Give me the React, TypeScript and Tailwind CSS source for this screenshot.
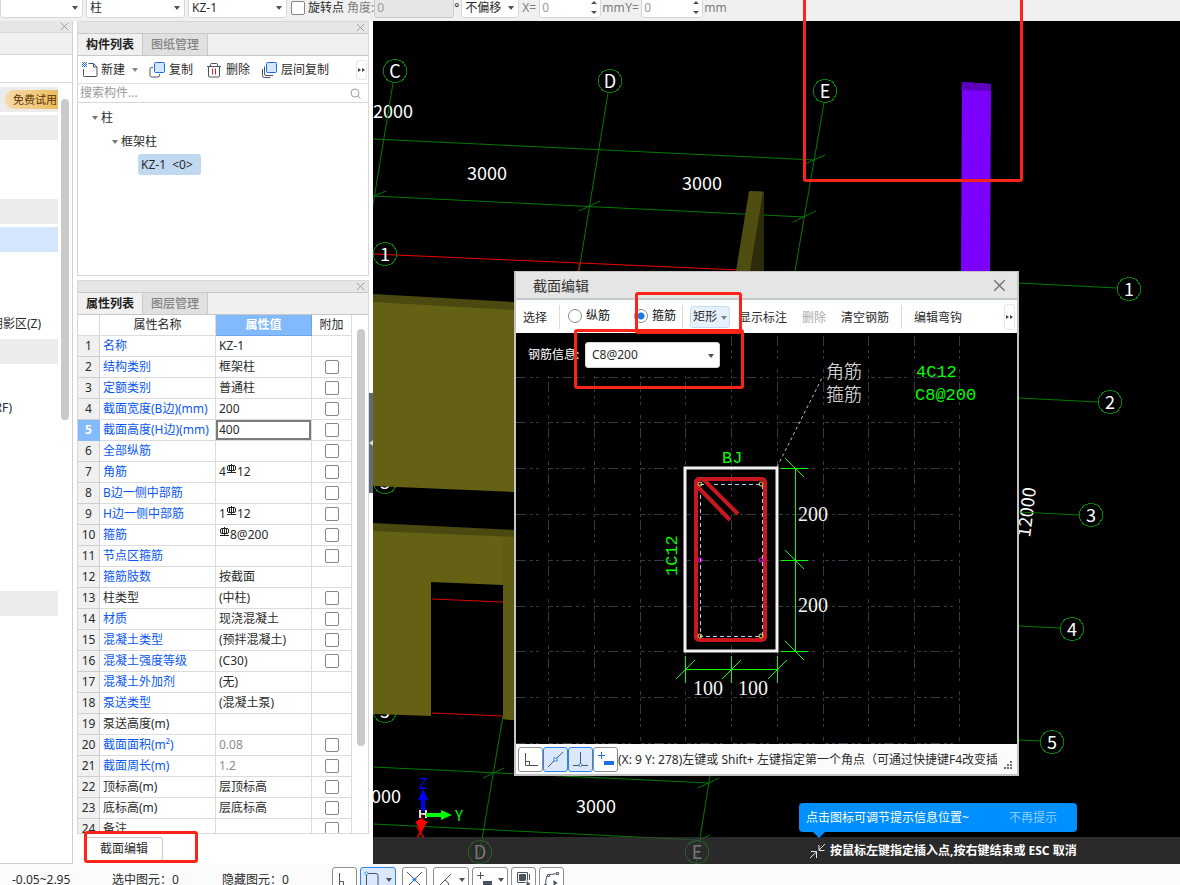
import type { ReactNode } from 'react';

const FONT = "font-['Noto_Sans','Noto_Sans_CJK_SC',sans-serif]";
const CAD_FONT = "font-['Noto_Sans_CJK_SC',sans-serif]";

interface PropertyRow {
  name: string;
  value: string;
  /** Shows a tick box in the 附加 column. */
  extra: boolean;
  /** Private attributes are drawn in black, public ones in blue. */
  own?: boolean;
  readOnly?: boolean;
  rebar?: [string, string];
}

const PROPERTIES: PropertyRow[] = [
  { name: '名称', value: 'KZ-1', extra: false },
  { name: '结构类别', value: '框架柱', extra: true },
  { name: '定额类别', value: '普通柱', extra: true },
  { name: '截面宽度(B边)(mm)', value: '200', extra: true },
  { name: '截面高度(H边)(mm)', value: '400', extra: true },
  { name: '全部纵筋', value: '', extra: true },
  { name: '角筋', value: '', rebar: ['4', '12'], extra: true },
  { name: 'B边一侧中部筋', value: '', extra: true },
  { name: 'H边一侧中部筋', value: '', rebar: ['1', '12'], extra: true },
  { name: '箍筋', value: '', rebar: ['', '8@200'], extra: true },
  { name: '节点区箍筋', value: '', extra: true },
  { name: '箍筋肢数', value: '按截面', extra: false },
  { name: '柱类型', value: '(中柱)', extra: true, own: true },
  { name: '材质', value: '现浇混凝土', extra: true },
  { name: '混凝土类型', value: '(预拌混凝土)', extra: true },
  { name: '混凝土强度等级', value: '(C30)', extra: true },
  { name: '混凝土外加剂', value: '(无)', extra: false },
  { name: '泵送类型', value: '(混凝土泵)', extra: false },
  { name: '泵送高度(m)', value: '', extra: false, own: true },
  { name: '截面面积(m²)', value: '0.08', extra: true, readOnly: true },
  { name: '截面周长(m)', value: '1.2', extra: true, readOnly: true },
  { name: '顶标高(m)', value: '层顶标高', extra: true, own: true },
  { name: '底标高(m)', value: '层底标高', extra: true, own: true },
  { name: '备注', value: '', extra: true, own: true },
];

const SELECTED_ROW = 4;

function Caret({ className = '' }: { className?: string }) {
  return (
    <svg width="6" height="4" viewBox="0 0 6 4" className={className} aria-hidden="true">
      <path d="M0 0h6L3 4z" fill="currentColor" />
    </svg>
  );
}

function CloseIcon({ size }: { size: number }) {
  return (
    <svg width={size} height={size} viewBox="0 0 10 10" aria-hidden="true">
      <path d="M1 1l8 8M9 1l-8 8" stroke="currentColor" fill="none" />
    </svg>
  );
}

function CheckBox({ label }: { label: string }) {
  return (
    <input
      type="checkbox"
      aria-label={label}
      className="block size-[14px] shrink-0 appearance-none rounded-[2px] border border-[#868686] bg-white checked:bg-[#2f86ea]"
    />
  );
}

/* ---------- top option bar ---------- */

function BarSelect({ label, value, className }: { label: string; value: string; className: string }) {
  return (
    <div className={`relative shrink-0 ${className}`}>
      <select
        aria-label={label}
        defaultValue={value}
        className="block h-[21px] w-full appearance-none rounded-[3px] border border-[#d4d7dc] bg-white pl-[3px] text-[12px] leading-[19px]"
      >
        <option>{value}</option>
      </select>
      <Caret className="absolute top-[9px] right-[5px] text-[#4a5260]" />
    </div>
  );
}

function BarSpinner({ label }: { label: string }) {
  return (
    <div className="relative w-[62px] shrink-0">
      <input
        aria-label={label}
        defaultValue="0"
        className="block h-[21px] w-full rounded-[3px] border border-[#d4d7dc] bg-white pl-[2px] text-[#9a9a9a]"
      />
      <svg width="6" height="14" viewBox="0 0 6 14" className="absolute top-[3px] right-1 text-[#4a5260]">
        <path d="M0 4h6L3 1zM0 11h6L3 14z" fill="currentColor" />
      </svg>
    </div>
  );
}

function OptionBar() {
  return (
    <header className="flex h-[21px] shrink-0 items-center overflow-hidden bg-[#f0f0f0] pb-[6px] text-[12px] leading-[14px] whitespace-nowrap">
      <BarSelect label="楼层" value="" className="w-[83px]" />
      <BarSelect label="构件类型" value="柱" className="ml-[3px] w-[99px]" />
      <BarSelect label="构件" value="KZ-1" className="ml-[3px] w-[99px]" />
      <label className="ml-1 flex items-center gap-[3px]">
        <CheckBox label="旋转点" />
        旋转点
      </label>
      <label className="ml-[3px] flex items-center text-[#7d7d7d]">
        角度:
        <input
          defaultValue="0"
          className="h-[21px] w-[80px] rounded-[3px] border border-[#c9cdd3] bg-[#e6e6e6] pl-[2px] text-[#9a9a9a]"
        />
      </label>
      <span className="w-[7px]">°</span>
      <BarSelect label="偏移方式" value="不偏移" className="w-[58px]" />
      <span className="ml-[3px] w-[17px] text-[#7d7d7d]">X=</span>
      <BarSpinner label="X" />
      <span className="ml-[1px] w-[23px] text-[#7d7d7d]">mm</span>
      <span className="w-[16px] text-[#7d7d7d]">Y=</span>
      <BarSpinner label="Y" />
      <span className="ml-[1px] text-[#7d7d7d]">mm</span>
    </header>
  );
}

/* ---------- far left navigation, cut off by the window edge ---------- */

const NAV_ROWS: Record<number, string> = {
  1: 'bg-[#ececec]',
  4: 'bg-[#ececec]',
  5: 'bg-[#d3e6fc]',
  9: 'bg-[#ececec]',
  18: 'bg-[#ececec]',
};

function NavColumn() {
  return (
    <aside className="flex w-[73px] shrink-0 flex-col border-r border-b border-[#d0d0d0] bg-white">
      <div className="flex h-3 shrink-0 items-center justify-end border-b border-[#d8d8d8] bg-[#e6e6e6] pr-[3px] text-[#999]">
        <button type="button" aria-label="关闭导航">
          <CloseIcon size={9} />
        </button>
      </div>
      <div className="h-[22px] shrink-0 border-b border-[#d8d8d8] bg-[#f0f0f0]" />
      <div className="h-[28px] shrink-0 border-b border-[#d8d8d8]" />
      <div className="flex min-h-0 flex-1 overflow-hidden pt-[4px]">
        <ul className="flex w-[58px] flex-col gap-[3px]">
          <li className="flex h-[25px] items-center justify-end bg-[#ececec]">
            <button
              type="button"
              className="h-[19px] w-[53px] rounded-l-full bg-linear-to-r from-[#f6daa9] to-[#ecbd5c] pl-[7px] text-[11px] leading-[19px] whitespace-nowrap text-[#5c3206]"
            >
              免费试用
            </button>
          </li>
          {Array.from({ length: 18 }, (_, i) => i + 1).map((n) => (
            <li key={n} className={`flex h-[25px] shrink-0 items-center overflow-hidden text-[12px] ${NAV_ROWS[n] ?? ''}`}>
              {n === 8 && <span className="flex w-[41px] justify-end overflow-hidden whitespace-nowrap">阴影区(Z)</span>}
              {n === 11 && <span className="flex w-[12px] justify-end overflow-hidden whitespace-nowrap">(RF)</span>}
            </li>
          ))}
        </ul>
        <div className="mt-3 ml-[3px] h-[321px] w-2 rounded-full bg-[#c9c9c9]" />
      </div>
    </aside>
  );
}

/* ---------- dock panels ---------- */

function PanelHead({ tabs }: { tabs: [string, string] }) {
  return (
    <>
      <div className="flex h-[11px] shrink-0 items-center justify-end bg-[#e6e6e6] pr-[3px] text-[#999]">
        <button type="button" aria-label={`关闭${tabs[0]}`}>
          <CloseIcon size={9} />
        </button>
      </div>
      <div role="tablist" className="flex h-[23px] shrink-0 border-y border-[#c6c8cc] bg-[#f0f0f0] text-[12px] leading-[21px]">
        <button type="button" role="tab" aria-selected="true" className="w-[65px] border-r border-[#c6c8cc] font-bold text-[#222]">
          {tabs[0]}
        </button>
        <button type="button" role="tab" aria-selected="false" className="w-[65px] border-r border-[#c6c8cc] bg-[#e0e0e0] font-medium text-[#858585]">
          {tabs[1]}
        </button>
      </div>
    </>
  );
}

function CopyIcon({ layered = false }: { layered?: boolean }) {
  return (
    <svg width="16" height="16" viewBox="0 0 16 16" fill="none" aria-hidden="true">
      {layered ? (
        <path d="M3.500 4.500v7.500q0 1.500 1.500 1.500h7M1.500 7v6.500q0 2 2 2h6" stroke="#4a5260" />
      ) : (
        <path d="M4 5.500H2.500q-1.500 0-1.500 1.500v6.500q0 1.500 1.500 1.500h6.500q1.500 0 1.500-1.500v-1.500" stroke="#4a5260" />
      )}
      <rect x="5.500" y="0.500" width="10" height="10" rx="1" fill="#d6e7fd" stroke="#1a6fe0" />
    </svg>
  );
}

function NewIcon() {
  return (
    <svg width="16" height="16" viewBox="0 0 16 16" fill="none" aria-hidden="true">
      <path d="M6.500 1.500h5l3.500 3.500v8.500q0 1-1 1H2.500q-1 0-1-1V7M11.500 1.500V5H15" stroke="#4a5260" />
      <path d="M0 0h1v1H0zM2 0h1v1H2zM4 0h1v1H4zM1 1h1v1H1zM3 1h1v1H3zM0 2h1v1H0zM2 2h1v1H2zM4 2h1v1H4zM1 3h1v1H1zM3 3h1v1H3zM0 4h1v1H0zM2 4h1v1H2zM4 4h1v1H4z" fill="#1a6fe0" />
    </svg>
  );
}

function TrashIcon() {
  return (
    <svg width="14" height="16" viewBox="0 0 14 16" fill="none" aria-hidden="true">
      <path d="M0 4.500h14M3.500 4V2.500q0-1 1-1h5q1 0 1 1V4M1.500 5v9q0 1 1 1h9q1 0 1-1V5" stroke="#4a5260" />
      <path d="M5.500 6.500v6M8.500 6.500v6" stroke="#e02020" />
    </svg>
  );
}

function OverflowButton({ className }: { className: string }) {
  return (
    <button type="button" aria-label="更多" className={`flex shrink-0 items-center justify-center rounded-[3px] border border-[#e6e6e6] text-[#3f4652] ${className}`}>
      <svg width="7" height="4" viewBox="0 0 7 4" aria-hidden="true">
        <path d="M0 0l3 2-3 2zM4 0l3 2-3 2z" fill="currentColor" />
      </svg>
    </button>
  );
}

function ComponentPanel() {
  return (
    <section className="flex h-[255px] shrink-0 flex-col border border-[#d8d8d8] bg-white">
      <PanelHead tabs={['构件列表', '图纸管理']} />
      <div className="flex h-[28px] shrink-0 items-center border-b border-[#e0e0e0] pt-[1px] pl-1 text-[12px] whitespace-nowrap">
        <button type="button" className="flex items-center gap-[3px]">
          <NewIcon />
          新建
          <Caret className="ml-1 text-[#888]" />
        </button>
        <button type="button" className="ml-[11px] flex items-center gap-1">
          <CopyIcon />
          复制
        </button>
        <button type="button" className="ml-[14px] flex items-center gap-[5px]">
          <TrashIcon />
          删除
        </button>
        <button type="button" className="ml-[11px] flex items-center gap-1">
          <CopyIcon layered />
          层间复制
        </button>
        <OverflowButton className="mr-[1px] ml-auto h-5 w-[11px]" />
      </div>
      <div className="flex h-[19px] shrink-0 items-center border-b border-[#d8d8d8] pr-[7px] pl-[2px]">
        <input
          aria-label="搜索构件"
          placeholder="搜索构件..."
          className="h-[18px] min-w-0 flex-1 text-[12px] outline-none placeholder:text-[#9a9a9a]"
        />
        <svg width="11" height="11" viewBox="0 0 11 11" fill="none" stroke="#a0a0a0" aria-hidden="true">
          <circle cx="5" cy="5" r="4" />
          <path d="M8 8l2.500 2.500" />
        </svg>
      </div>
      <ul className="pt-[3px] text-[12px] leading-6">
        <li className="flex h-6 items-center gap-[3px] pl-[14px]">
          <Caret className="text-[#777]" />柱
        </li>
        <li className="flex h-6 items-center gap-[3px] pl-[34px]">
          <Caret className="text-[#777]" />
          框架柱
        </li>
        <li className="h-6 pl-[60px]">
          <span className="block h-[21px] w-[63px] rounded-[3px] bg-[#c0d8f0] pl-[3px] leading-[21px] whitespace-pre">{'KZ-1  <0>'}</span>
        </li>
      </ul>
    </section>
  );
}

/** Grade mark for HRB400 bars: a circle with a cross bar and two strokes. */
function RebarMark() {
  return (
    <svg width="11" height="11" viewBox="0 0 11 11" fill="none" stroke="#222" className="inline-block align-[1px]" role="img" aria-label="C">
      <path d="M3 1.500h5q1.500 0 1.500 1.500v2q0 1.500-1.500 1.500h-5q-1.500 0-1.500-1.500v-2q0-1.500 1.500-1.500M5.500 0v9M3.500 1.500v5M7.500 1.500v5M1 8.500h9" />
    </svg>
  );
}

function PropertyPanel() {
  return (
    <section className="flex min-h-0 flex-1 flex-col border border-[#d8d8d8] bg-white">
      <PanelHead tabs={['属性列表', '图层管理']} />
      <div className="flex min-h-0 flex-1 overflow-hidden">
        <div className="min-w-0 flex-1">
          <table className="w-full table-fixed border-separate border-spacing-0 text-[12px] leading-5">
            <colgroup>
              <col className="w-[22px]" />
              <col className="w-[116px]" />
              <col className="w-[96px]" />
              <col />
            </colgroup>
            <thead>
              <tr className="h-[21px] text-center">
                <th aria-label="序号" className="border-r border-b border-[#dcdcdc] p-0" />
                <th className="border-r border-b border-[#dcdcdc] p-0 font-normal">属性名称</th>
                <th className="border-r border-b border-[#6aa7ee] bg-[#82bafb] p-0 font-bold text-white">属性值</th>
                <th className="border-r border-b border-[#dcdcdc] p-0 font-normal">附加</th>
              </tr>
            </thead>
            <tbody>
              {PROPERTIES.map((row, i) => (
                <tr key={row.name} className="h-[21px]">
                  <th
                    scope="row"
                    className={`border-r border-b p-0 text-center ${
                      i === SELECTED_ROW ? 'border-[#82bafb] bg-[#82bafb] font-bold text-white' : 'border-[#cfcfcf] bg-[#f0f0f0] font-normal'
                    }`}
                  >
                    {i + 1}
                  </th>
                  <td className={`overflow-hidden border-r border-b border-[#dcdcdc] p-0 pl-[3px] whitespace-nowrap ${row.own ? '' : 'text-[#0a57f5]'}`}>
                    {row.name}
                  </td>
                  <td className={`border-r border-b border-[#dcdcdc] p-0 whitespace-nowrap ${row.readOnly ? 'text-[#8c8c8c]' : ''}`}>
                    {i === SELECTED_ROW ? (
                      <input
                        aria-label={row.name}
                        defaultValue={row.value}
                        className="block h-5 w-full border-2 border-[#7b7b7b] pl-[1px] outline-none"
                      />
                    ) : (
                      <span className="block h-5 pl-[3px]">
                        {row.rebar ? (
                          <>
                            {row.rebar[0]}
                            <RebarMark />
                            {row.rebar[1]}
                          </>
                        ) : (
                          row.value
                        )}
                      </span>
                    )}
                  </td>
                  <td className="border-r border-b border-[#dcdcdc] p-0">
                    {row.extra && i > 0 && (
                      <div className="flex justify-center">
                        <CheckBox label={`${row.name} 附加`} />
                      </div>
                    )}
                  </td>
                </tr>
              ))}
            </tbody>
          </table>
        </div>
        <div className="w-4 shrink-0 pt-[14px] pl-[5px]">
          <div className="h-[417px] w-2 rounded-full bg-[#c9c9c9]" />
        </div>
      </div>
    </section>
  );
}

/* ---------- 3D model view ---------- */

function Bubble({ x, y, label, dim = false }: { x: number; y: number; label: string; dim?: boolean }) {
  const points = Array.from({ length: 10 }, (_, i) => {
    const a = (i * Math.PI) / 5 - Math.PI / 2;
    return `${(x + 12 * Math.cos(a)).toFixed(1)},${(y + 12 * Math.sin(a)).toFixed(1)}`;
  }).join(' ');
  return (
    <g>
      <polygon points={points} fill="none" stroke={dim ? '#00a000' : '#008400'} shapeRendering="crispEdges" />
      <text x={x} y={y + 7} textAnchor="middle" fill="#fff" fontSize="18">
        {label}
      </text>
    </g>
  );
}

function ModelScene() {
  return (
    <svg className={`absolute inset-0 size-full ${CAD_FONT}`} fontSize="18" aria-label="三维模型">
      <g transform="translate(-373 -21)">
        <Bubble x={385} y={482} label="3" />
        <Bubble x={385} y={711} label="5" />

        <g fill="#fff" textAnchor="middle">
          <text x="393" y="118">2000</text>
          <text x="487" y="180">3000</text>
          <text x="702" y="190">3000</text>
          <text x="596" y="813">3000</text>
          <text x="381" y="803">3000</text>
          <text transform="translate(1033 513) rotate(-83)">12000</text>
        </g>

        {/* axis grid */}
        <g stroke="#007a00" fill="none">
          <path d="M393 83L373 205M608 93L579 271M824 103L795 271" />
          <path d="M373 139L815 160M373 196L804 217" />
          <path d="M374 196l12-5M579 211l21-10M805 164l20-9M793 222l23-11" />
          <path d="M1019 283l98 5M1019 398l79 4M1019 512l60 3M1019 626l41 2M1019 740l21 1" />
          <path d="M373 767L709 783M373 824L698 840" />
          <path d="M483 778l21-10M698 788l21-10M690 844l20-9" />
          <path d="M503 716L478 863M710 776L696 863" />
        </g>
        <path d="M373 254L740 270M580 263l-2 8" stroke="#f00000" fill="none" />

        {/* walls */}
        <path d="M373 294L514 302V312L373 304z" fill="#4b4910" />
        <path d="M373 302L514 310V492L373 486z" fill="#646114" />
        <path d="M373 523L514 530V539L373 533z" fill="#4b4910" />
        <path d="M373 531L514 537V720L503 719V585L431 582V716L373 714z" fill="#646114" />
        <path d="M503 537H514V720L503 719z" fill="#5f5c13" />
        <path d="M432 599l71 3M432 713l71 3" stroke="#e00000" fill="none" />
        <path d="M749 191L764 191.500V271H736z" fill="#4f4d10" />
        <path d="M763 192L764 191.500V271H750z" fill="#2d2c0a" />

        {/* column being placed */}
        <path d="M962 82L991 84 990 271H961z" fill="#7c00ff" />
        <path d="M962 82L991 84V91L961 90z" fill="#5d00bd" />

        <Bubble x={395} y={71} label="C" />
        <Bubble x={610} y={81} label="D" />
        <Bubble x={825} y={91} label="E" />
        <Bubble x={385} y={254} label="1" />
        <Bubble x={1129} y={289} label="1" />
        <Bubble x={1110} y={402} label="2" />
        <Bubble x={1091} y={515} label="3" />
        <Bubble x={1072} y={629} label="4" />
        <Bubble x={1052} y={742} label="5" />
        <Bubble x={480} y={852} label="D" dim />
        <Bubble x={697} y={852} label="E" dim />

        {/* axis gizmo */}
        <path d="M420 810v8M426 810v8M420 814h6" stroke="#ddd" strokeWidth="2" />
        <path d="M421 811V800H418L423 789 428 800H425V811z" fill="#0000ff" />
        <path d="M426 813L441 813V810L452 815 441 820V817L426 817z" fill="#00ff00" />
        <path d="M422 814v6M416 822L421 819 427 822 421 831z" fill="#ff0000" stroke="#ff0000" />
        <g fontSize="15" textAnchor="middle">
          <text x="423" y="789" fill="#0000ff">Z</text>
          <text x="459" y="821" fill="#00ff00">Y</text>
          <text x="420" y="838" fill="#ff0000">X</text>
        </g>
      </g>
    </svg>
  );
}

/* ---------- section editor dialog ---------- */

const GRID_X = [548, 594, 640, 685, 731, 777, 823, 868, 914, 959];
const GRID_Y = [377, 422, 468, 514, 560, 606, 651, 697, 743];

function SectionDrawing() {
  return (
    <svg className="absolute inset-0 size-full" aria-label="截面图">
      <g transform="translate(-516 -333)">
        <g stroke="#323a47" strokeDasharray="10 4 3 3 3" shapeRendering="crispEdges">
          {GRID_X.map((x) => (
            <line key={x} x1={x} x2={x} y1="336" y2="744" />
          ))}
          {GRID_Y.map((y) => (
            <line key={y} x1="516" x2="960" y1={y} y2={y} />
          ))}
        </g>
        <path d="M777 467L823 376" stroke="#bdbdbd" strokeDasharray="3 3" />

        <rect x="685" y="468" width="92" height="183" fill="none" stroke="#f2f2f2" strokeWidth="3" />
        <path d="M700 484H762V636H700z" fill="none" stroke="#a9c9f2" strokeDasharray="4 3" shapeRendering="crispEdges" />
        <g fill="none" stroke="#c8171e" strokeWidth="4">
          <rect x="696" y="479" width="69" height="161" rx="3" />
          <path d="M695 484l35 36M703 479l35 35" />
        </g>
        <g fill="none" stroke="#f0dc50">
          <circle cx="700" cy="484" r="2" />
          <circle cx="761" cy="484" r="2" />
          <circle cx="700" cy="636" r="2" />
          <circle cx="761" cy="636" r="2" />
        </g>
        <g fill="none" stroke="#ff00ff">
          <circle cx="700" cy="560" r="2" />
          <circle cx="761" cy="560" r="2" />
        </g>

        <g stroke="#00ff00" fill="none" shapeRendering="crispEdges">
          <path d="M795 468V651M781 468h27M781 560h27M781 651h27" />
          <path d="M685 669H777M685 656v27M731 656v27M777 656v27" />
          <path d="M785 458l19 19M785 550l19 19M785 641l19 19" />
          <path d="M676 679l19-19M722 679l19-19M768 679l19-19" />
        </g>

        <g className="font-['Noto_Sans_CJK_SC',sans-serif]" fontSize="18" fontWeight="300" fill="#f4f4f4">
          <text x="826" y="378">角筋</text>
          <text x="826" y="401">箍筋</text>
        </g>
        <g className="font-['Liberation_Mono',monospace]" fontSize="17" fill="#00ff00">
          <text x="916" y="377">4C12</text>
          <text x="915" y="400">C8@200</text>
          <text x="722" y="463">BJ</text>
          <text transform="translate(677 576) rotate(-90)">1C12</text>
        </g>
        <g className="font-['Liberation_Serif',serif]" fontSize="20" fill="#f4f4f4" textAnchor="middle">
          <text x="813" y="521">200</text>
          <text x="813" y="612">200</text>
          <text x="708" y="695">100</text>
          <text x="753" y="695">100</text>
        </g>
      </g>
    </svg>
  );
}

function Divider({ className }: { className: string }) {
  return <span className={`h-6 w-px shrink-0 bg-[#dcdcdc] ${className}`} />;
}

function BarRadio({ label, checked = false }: { label: string; checked?: boolean }) {
  return (
    <label className="flex items-center gap-[4px] text-[#111]">
      <input
        type="radio"
        name="bar-kind"
        defaultChecked={checked}
        className="size-[14px] appearance-none rounded-full border border-[#8a8a8a] bg-white checked:bg-[radial-gradient(circle,#1f7ae0_3px,#fff_4px)]"
      />
      {label}
    </label>
  );
}

function SnapButton({ label, active = false, children }: { label: string; active?: boolean; children: ReactNode }) {
  return (
    <button
      type="button"
      aria-label={label}
      aria-pressed={active}
      className={`flex size-[25px] shrink-0 items-center justify-center rounded-[3px] border ${
        active ? 'border-[#2f86ea] bg-[#dbe8fc]' : 'border-[#8e8e8e] bg-white'
      }`}
    >
      <svg width="17" height="17" viewBox="0 0 17 17" fill="none" stroke="#4a5260">
        {children}
      </svg>
    </button>
  );
}

function SectionEditor() {
  return (
    <div
      role="dialog"
      aria-label="截面编辑"
      className="absolute top-[250px] left-[141px] flex h-[505px] w-[505px] flex-col border-2 border-t border-[#c4c4c4] bg-black"
    >
      <div className="flex h-[26px] shrink-0 items-center justify-between bg-[#e5e5e5] pr-[11px] pl-[17px] text-[14px] text-[#333]">
        截面编辑
        <button type="button" aria-label="关闭" className="text-[#6c6c6c]">
          <CloseIcon size={13} />
        </button>
      </div>
      <div className="flex h-[35px] shrink-0 items-center overflow-hidden border-t-2 border-[#c3c9d0] bg-white pl-[7px] text-[12px] whitespace-nowrap">
        <button type="button" className="pt-[2px]">选择</button>
        <Divider className="ml-[12px]" />
        <div className="ml-2 flex gap-[24px] pb-[2px]">
          <BarRadio label="纵筋" />
          <BarRadio label="箍筋" checked />
        </div>
        <Divider className="ml-[6px]" />
        <div className="relative ml-[7px]">
          <select aria-label="箍筋形状" defaultValue="矩形" className="h-[22px] w-10 appearance-none rounded-[3px] border border-[#c4dcf7] bg-[#e6f1fd] pl-[2px]">
            <option>矩形</option>
          </select>
          <Caret className="absolute top-[10px] right-[3px] text-[#7a8290]" />
        </div>
        <button type="button" className="ml-[9px] pt-[2px]">显示标注</button>
        <button type="button" disabled className="ml-[15px] pt-[2px] text-[#aaa]">删除</button>
        <button type="button" className="ml-[15px] pt-[2px]">清空钢筋</button>
        <Divider className="ml-3" />
        <button type="button" className="ml-3 pt-[2px]">编辑弯钩</button>
        <OverflowButton className="mr-[2px] ml-auto h-[26px] w-[11px]" />
      </div>
      <div className="relative min-h-0 flex-1 overflow-hidden">
        <SectionDrawing />
        <div className="relative flex h-10 w-[210px] items-center gap-1 bg-black pt-1 pl-3 text-[12px]">
          <label htmlFor="rebar-info" className="w-[53px] text-white">
            钢筋信息:
          </label>
          <div className="relative">
            <select id="rebar-info" defaultValue="C8@200" className="h-[26px] w-[135px] appearance-none rounded-[3px] border border-[#d4d7dc] bg-white pl-[6px]">
              <option>C8@200</option>
            </select>
            <Caret className="absolute top-[12px] right-[6px] text-[#4a5260]" />
          </div>
        </div>
      </div>
      <div className="flex h-[30px] shrink-0 items-center bg-[#fbfbfb] pl-[2px] text-[12px]">
        <SnapButton label="正交">
          <path d="M3.500 2v12.500H16M3.500 10.500h4v4" />
        </SnapButton>
        <SnapButton label="对象捕捉" active>
          <path d="M1 16L16 1" />
          <rect x="7" y="7" width="3" height="3" fill="#fff" stroke="#2f86ea" />
        </SnapButton>
        <SnapButton label="垂足" active>
          <path d="M8.500 1v12M1 14.500h15" />
          <circle cx="8.500" cy="14" r="1.500" fill="#fff" stroke="#2f86ea" />
        </SnapButton>
        <SnapButton label="动态输入">
          <path d="M4.500 1v7M1 4.500h7" stroke="#1a73e8" />
          <path d="M7 10h10v4H7z" fill="#1a73e8" stroke="none" />
        </SnapButton>
        <p className="w-[379px] overflow-hidden pt-[2px] whitespace-pre">
          (X: 9 Y: 278)左键或 Shift+ 左键指定第一个角点（可通过快捷键F4改变插入点）
        </p>
        <svg width="9" height="9" viewBox="0 0 9 9" fill="#6b7280" className="mr-1 mb-1 ml-auto self-end" aria-hidden="true">
          <path d="M6 0h2v2H6zM3 3h2v2H3zM6 3h2v2H6zM0 6h2v2H0zM3 6h2v2H3zM6 6h2v2H6z" />
        </svg>
      </div>
    </div>
  );
}

function PromptBar() {
  return (
    <div className="absolute inset-x-0 bottom-0 h-[27px] bg-[#3c3c3c]/70">
      <div className="absolute bottom-[32px] left-[426px] flex h-[29px] w-[278px] items-center justify-between rounded-[4px] bg-[#008fff] pr-5 pl-[7px] text-[12px] whitespace-nowrap text-white">
        点击图标可调节提示信息位置~
        <button type="button" className="text-[#8fccff]">
          不再提示
        </button>
        <span className="absolute top-full left-[14px] border-x-[6px] border-t-[6px] border-x-transparent border-t-[#008fff]" />
      </div>
      <p className="ml-[437px] flex h-full items-center gap-1 text-[12px] font-bold whitespace-nowrap text-white">
        <svg width="16" height="16" viewBox="0 0 16 16" fill="none" stroke="#e8e8e8" aria-hidden="true">
          <path d="M15 1L9 7M9 2v5.500h5.500M0 15l6.500-6M1 8.500h5.500V15" />
        </svg>
        按鼠标左键指定插入点,按右键结束或 ESC 取消
      </p>
    </div>
  );
}

/* ---------- status bar ---------- */

function StatusButton({ label, menu = false, active = false, className, children }: {
  label: string;
  menu?: boolean;
  active?: boolean;
  className: string;
  children: ReactNode;
}) {
  return (
    <button
      type="button"
      aria-label={label}
      className={`flex h-[25px] shrink-0 items-center rounded-[3px] border ${menu ? 'w-[36px] justify-between px-[3px]' : 'w-[25px] justify-center'} ${
        active ? 'border-[#2f86ea] bg-[#dbe8fc]' : 'border-[#8e8e8e] bg-white'
      } ${className}`}
    >
      <svg width="17" height="17" viewBox="0 0 17 17" fill="none" stroke="#4a5260">
        {children}
      </svg>
      {menu && <Caret className="text-[#4a5260]" />}
    </button>
  );
}

function StatusBar() {
  return (
    <footer className="flex h-[21px] shrink-0 items-start overflow-hidden bg-[#fbfbfb] pt-[3px] pl-[12px] text-[12px] leading-[25px] whitespace-nowrap">
      <span className="w-[100px] shrink-0">-0.05~2.95</span>
      <span className="w-[110px] shrink-0">选中图元：0</span>
      <span className="w-[110px] shrink-0">隐藏图元：0</span>
      <StatusButton label="正交" className="">
        <path d="M3.500 2v12.500H16M3.500 10.500h4v4" />
      </StatusButton>
      <StatusButton label="捕捉" menu active className="ml-[3px]">
        <path d="M4 2.500h8q2 0 2 2V15M2.500 4v11" />
        <circle cx="2.500" cy="2.500" r="1.500" fill="#fff" stroke="#2f86ea" />
      </StatusButton>
      <StatusButton label="交点" className="ml-[6px]">
        <path d="M1 1l15 15M16 1L1 16" />
        <circle cx="8.500" cy="8.500" r="1.500" fill="#2f86ea" stroke="#2f86ea" />
      </StatusButton>
      <StatusButton label="角度" menu className="ml-[6px]">
        <path d="M2 15L14 3M2 15.500h14M8 9q4 2 4 6" />
      </StatusButton>
      <StatusButton label="动态输入" menu className="ml-[3px]">
        <path d="M4.500 1v7M1 4.500h7" />
        <path d="M7 10h9v4H7z" fill="#4a5260" stroke="none" />
      </StatusButton>
      <StatusButton label="选择过滤" className="ml-[3px]">
        <path d="M2.500 1.500h10v10h-10z" />
        <path d="M4.500 3.500h6v6h-6z" fill="#4a5260" />
        <path d="M11 9l5 4-5 4z" fill="#4a5260" stroke="#fff" />
        <path d="M14.500 3v6M4 14.500h6" />
      </StatusButton>
      <StatusButton label="弧线" className="ml-[3px]">
        <path d="M2.500 14Q3 5 5 4l9-1.500" />
        <path d="M1.500 13.500h2v2h-2zM4.500 3.500h2v2h-2zM13.500 1.500h2v2h-2z" fill="#fff" />
        <path d="M10.500 9l4 3-4 3z" fill="#4a5260" stroke="none" />
      </StatusButton>
    </footer>
  );
}

/** Red frame that marks a step in the tutorial. */
function Mark({ className }: { className: string }) {
  return <div className={`pointer-events-none absolute rounded-[3px] border-[3px] border-[#fb2416] ${className}`} />;
}

export default function App() {
  return (
    <div className={`relative flex h-screen flex-col overflow-hidden bg-white text-[12px] text-[#2b2b2b] ${FONT}`}>
      <OptionBar />
      <main className="flex min-h-0 flex-1">
        <NavColumn />
        <div className="ml-1 flex w-[292px] shrink-0 flex-col">
          <ComponentPanel />
          <div className="h-1 shrink-0" />
          <PropertyPanel />
          <div className="flex h-[30px] shrink-0 items-center pl-[8px]">
            <button type="button" className="h-6 w-[78px] rounded-[3px] border border-[#c8c8c8] bg-white text-[12px]">
              截面编辑
            </button>
          </div>
        </div>
        <button type="button" aria-label="收起面板" className="mt-[372px] flex h-[100px] w-1 shrink-0 items-center bg-[#5f6b78]">
          <svg width="4" height="6" viewBox="0 0 4 6" aria-hidden="true">
            <path d="M4 0v6L0 3z" fill="#cfd6de" />
          </svg>
        </button>
        <div className="relative min-w-0 flex-1 overflow-hidden bg-black">
          <ModelScene />
          <PromptBar />
          <SectionEditor />
        </div>
      </main>
      <StatusBar />

      <Mark className="-top-2 left-[803px] h-[190px] w-[220px]" />
      <Mark className="top-[292px] left-[635px] h-[42px] w-[107px]" />
      <Mark className="top-[329px] left-[574px] h-[60px] w-[170px]" />
      <Mark className="top-[831px] left-[84px] h-[32px] w-[114px]" />
    </div>
  );
}
